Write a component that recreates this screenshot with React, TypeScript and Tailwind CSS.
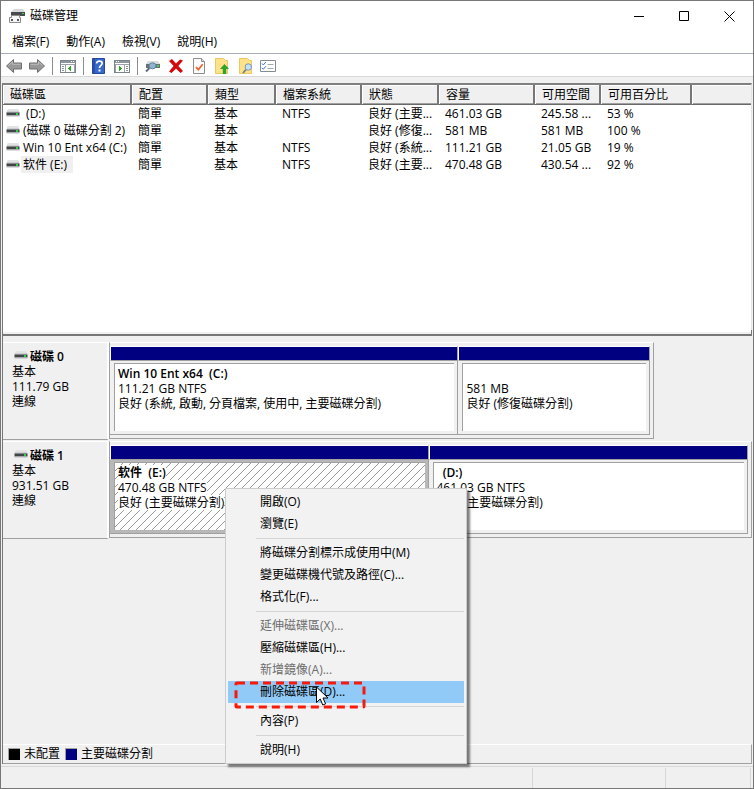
import type { ReactNode } from "react";
import clsx from "clsx";

type Volume = {
  name: string;
  layout: string;
  type: string;
  fs: string;
  status: string;
  capacity: string;
  free: string;
  percent: string;
  selected?: boolean;
};

type PartitionInfo = {
  title: string;
  size: string;
  status: string;
  grow: string;
  selected?: boolean;
};

const columns = [
  { label: "磁碟區", width: "w-[128px]" },
  { label: "配置", width: "w-[76px]" },
  { label: "類型", width: "w-[68px]" },
  { label: "檔案系統", width: "w-[86px]" },
  { label: "狀態", width: "w-[77px]" },
  { label: "容量", width: "w-[96px]" },
  { label: "可用空間", width: "w-[66px]" },
  { label: "可用百分比", width: "w-[91px]" },
  { label: "", width: "" },
];

const volumes: Volume[] = [
  { name: " (D:)", layout: "簡單", type: "基本", fs: "NTFS", status: "良好 (主要...", capacity: "461.03 GB", free: "245.58 ...", percent: "53 %" },
  { name: "(磁碟 0 磁碟分割 2)", layout: "簡單", type: "基本", fs: "", status: "良好 (修復...", capacity: "581 MB", free: "581 MB", percent: "100 %" },
  { name: "Win 10 Ent x64 (C:)", layout: "簡單", type: "基本", fs: "NTFS", status: "良好 (系統...", capacity: "111.21 GB", free: "21.05 GB", percent: "19 %" },
  { name: "软件 (E:)", layout: "簡單", type: "基本", fs: "NTFS", status: "良好 (主要...", capacity: "470.48 GB", free: "430.54 ...", percent: "92 %", selected: true },
];

const disks: { name: string; size: string; width: string; partitions: PartitionInfo[] }[] = [
  {
    name: "磁碟 0",
    size: "111.79 GB",
    width: "w-[84.7%]",
    partitions: [
      { title: "Win 10 Ent x64  (C:)", size: "111.21 GB NTFS", status: "良好 (系統, 啟動, 分頁檔案, 使用中, 主要磁碟分割)", grow: "grow-[349]" },
      { title: " ", size: "581 MB", status: "良好 (修復磁碟分割)", grow: "grow-[191]" },
    ],
  },
  {
    name: "磁碟 1",
    size: "931.51 GB",
    width: "w-full",
    partitions: [
      { title: "软件  (E:)", size: "470.48 GB NTFS", status: "良好 (主要磁碟分割)", grow: "grow-[319]", selected: true },
      { title: "  (D:)", size: "461.03 GB NTFS", status: "良好 (主要磁碟分割)", grow: "grow-[320]" },
    ],
  },
];

const contextMenu: { label: string; disabled?: boolean; active?: boolean }[][] = [
  [{ label: "開啟(O)" }, { label: "瀏覽(E)" }],
  [{ label: "將磁碟分割標示成使用中(M)" }, { label: "變更磁碟機代號及路徑(C)..." }, { label: "格式化(F)..." }],
  [
    { label: "延伸磁碟區(X)...", disabled: true },
    { label: "壓縮磁碟區(H)..." },
    { label: "新增鏡像(A)...", disabled: true },
    { label: "刪除磁碟區(D)...", active: true },
  ],
  [{ label: "內容(P)" }],
  [{ label: "說明(H)" }],
];

function DriveIcon() {
  return (
    <svg width="14" height="8" viewBox="0 0 14 8" className="shrink-0" aria-hidden="true">
      <path d="M2 0H12L13 1V4H1V1Z" fill="#e1e3e5" />
      <path d="M1 2H13L13.5 4H0.5Z" fill="#cdd0d2" />
      <rect x="0.5" y="3.5" width="13" height="3" fill="#414548" />
      <rect x="0.5" y="6.5" width="13" height="1" fill="#b4b7ba" />
      <rect x="10" y="4" width="2" height="2" fill="#2fd344" />
    </svg>
  );
}

function AppIcon() {
  return (
    <svg width="16" height="16" viewBox="0 0 16 16" aria-hidden="true">
      <path d="M5 1H14L16 4H2Z" fill="#d6d8da" />
      <path d="M2 4H16V8H2Z" fill="#474b4e" />
      <rect x="13" y="5" width="2" height="1" fill="#35d644" />
      <path d="M2.5 7.5H10.5V9.5H11.5V14.5H0.5V9.5H2.5Z" fill="#f6f6f6" stroke="#8b8b8b" />
      <rect x="2" y="11" width="2" height="2" fill="#5a5a5a" />
      <rect x="8" y="11" width="2" height="2" fill="#5a5a5a" />
    </svg>
  );
}

function ArrowIcon({ flip }: { flip?: boolean }) {
  return (
    <svg width="16" height="16" viewBox="0 0 16 16" className={clsx(flip && "-scale-x-100")} aria-hidden="true">
      <path d="M0.5 8L7.5 1.5V5H15.5V11H7.5V14.5Z" fill="#989898" stroke="#6f6f6f" />
      <path d="M2.5 7.5L6.5 3.8V6.3H14.5" fill="none" stroke="#bdbdbd" />
    </svg>
  );
}

function PanelIcon({ flip }: { flip?: boolean }) {
  return (
    <svg width="16" height="16" viewBox="0 0 16 16" className={clsx(flip && "-scale-x-100")} shapeRendering="crispEdges" aria-hidden="true">
      <path d="M0.5 2.5H15.5V14.5H0.5Z" fill="#fff" stroke="#7d858c" />
      <path d="M1 3H15V5H1Z" fill="#8f979e" />
      <path d="M11 3H12V4H11ZM13 3H14V4H13Z" fill="#fff" />
      <path d="M1 6.5H15M5.5 7V14M14.5 7V14" stroke="#9ba2a8" />
      <path d="M2 8.5H4M2 10.5H4M2 12.5H4" stroke="#8b939a" />
      <path d="M11 8V13L8 10.5Z" fill="#28a71e" />
    </svg>
  );
}

function HelpIcon() {
  return (
    <svg width="16" height="16" viewBox="0 0 16 16" aria-hidden="true">
      <path d="M1.5 0.5H13.5V15.5H1.5Z" fill="#3768cb" stroke="#234a9f" />
      <path d="M2 1H4V15H2Z" fill="#2a50ac" />
      <path d="M5.6 5.4C5.6 2.3 11.2 2.4 11.2 5.3C11.2 7.3 8.5 7.6 8.5 10" fill="none" stroke="#fff" strokeWidth="1.7" />
      <rect x="7.5" y="11.5" width="2" height="2" fill="#fff" />
    </svg>
  );
}

function DiskSearchIcon() {
  return (
    <svg width="16" height="16" viewBox="0 0 16 16" aria-hidden="true">
      <path d="M3 3H13L15 6H1Z" fill="#dadcde" />
      <rect x="1" y="6" width="14" height="4" fill="#6a6f73" />
      <rect x="12" y="7" width="2" height="2" fill="#3ad24a" />
      <path d="M4.5 10L1 13.5" stroke="#5f6e7c" strokeWidth="2" />
      <ellipse cx="7.5" cy="7.8" rx="3.5" ry="3" fill="#8fb4d2" stroke="#64829c" />
    </svg>
  );
}

function DeleteIcon() {
  return (
    <svg width="16" height="16" viewBox="0 0 16 16" aria-hidden="true">
      <path d="M1 3L4 1L8 5.5L12 1.5L15 2.5L10.3 8L15 13L12.5 15L8 10.6L3.6 15L1 13.4L5.6 8Z" fill="#d3080c" />
    </svg>
  );
}

function CheckDocIcon() {
  return (
    <svg width="16" height="16" viewBox="0 0 16 16" aria-hidden="true">
      <path d="M2.5 0.5H10.5L13.5 3.5V15.5H2.5Z" fill="#fbfbfb" stroke="#8d8d8d" />
      <path d="M10.5 0.5V3.5H13.5" fill="#ddd" stroke="#8d8d8d" />
      <path d="M5 9.2L7.3 11.7L11.7 6.2" fill="none" stroke="#ec6333" strokeWidth="1.8" />
    </svg>
  );
}

function FolderUpIcon() {
  return (
    <svg width="16" height="16" viewBox="0 0 16 16" aria-hidden="true">
      <path d="M1.5 0.5H9.5L11.5 2.5H13.5V15.5H1.5Z" fill="#ffe187" stroke="#e9c966" />
      <path d="M10.5 6L15 11H12.2V16H8.8V11H6Z" fill="#2aa52c" />
    </svg>
  );
}

function FolderSearchIcon() {
  return (
    <svg width="16" height="16" viewBox="0 0 16 16" aria-hidden="true">
      <path d="M2.5 0.5H10.5L12.5 2.5H14.5V15.5H2.5Z" fill="#ffe187" stroke="#e9c966" />
      <path d="M9 11.5L6 15" stroke="#6f7f8d" strokeWidth="1.8" />
      <circle cx="11.3" cy="9" r="3.2" fill="#c6e2f5" stroke="#7a97b0" />
    </svg>
  );
}

function ChecklistIcon() {
  return (
    <svg width="16" height="16" viewBox="0 0 16 16" aria-hidden="true">
      <path d="M0.5 2.5H15.5V13.5H0.5Z" fill="#fff" stroke="#858d94" />
      <path d="M2 5.5L3.3 7L5.8 4M2 9.8L3.3 11.3L5.8 8.3" fill="none" stroke="#3878c9" />
      <path d="M7.5 6.5H13.5M7.5 10.5H13.5" stroke="#a0a7ad" />
    </svg>
  );
}

function ToolButton({ label, children }: { label: string; children: ReactNode }) {
  return (
    <button type="button" aria-label={label} className="size-4 shrink-0">
      {children}
    </button>
  );
}

function Divider() {
  return <div className="h-[18px] w-px bg-[#8d8d8d]" />;
}

function TitleBar() {
  return (
    <header className="flex h-[30px] items-center pr-px pl-2">
      <AppIcon />
      <h1 className="ml-[5px] flex-1">磁碟管理</h1>
      <button type="button" aria-label="最小化" className="flex h-full w-[45px] items-center justify-center">
        <svg width="11" height="11" viewBox="0 0 11 11"><path d="M0 5.5H10" stroke="#000" /></svg>
      </button>
      <button type="button" aria-label="最大化" className="flex h-full w-[45px] items-center justify-center">
        <svg width="11" height="11" viewBox="0 0 11 11"><path d="M0.5 0.5H9.5V9.5H0.5Z" fill="none" stroke="#000" /></svg>
      </button>
      <button type="button" aria-label="關閉" className="flex h-full w-[45px] items-center justify-center">
        <svg width="11" height="11" viewBox="0 0 11 11"><path d="M0.5 0.5L10.5 10.5M10.5 0.5L0.5 10.5" stroke="#000" /></svg>
      </button>
    </header>
  );
}

function Toolbar() {
  return (
    <div className="flex h-[23px] items-center gap-[7px] border-b border-[#d9d9d9] pt-0.5 pl-[5px]">
      <ToolButton label="上一頁"><ArrowIcon /></ToolButton>
      <ToolButton label="下一頁"><ArrowIcon flip /></ToolButton>
      <Divider />
      <ToolButton label="顯示主控台樹狀目錄"><PanelIcon /></ToolButton>
      <Divider />
      <ToolButton label="說明"><HelpIcon /></ToolButton>
      <ToolButton label="顯示動作窗格"><PanelIcon flip /></ToolButton>
      <Divider />
      <ToolButton label="重新掃描"><DiskSearchIcon /></ToolButton>
      <ToolButton label="刪除"><DeleteIcon /></ToolButton>
      <ToolButton label="內容"><CheckDocIcon /></ToolButton>
      <ToolButton label="開啟"><FolderUpIcon /></ToolButton>
      <ToolButton label="瀏覽"><FolderSearchIcon /></ToolButton>
      <ToolButton label="設定"><ChecklistIcon /></ToolButton>
    </div>
  );
}

function VolumeTable() {
  return (
    <table className="w-full table-fixed border-collapse text-left whitespace-nowrap">
      <thead>
        <tr className="bg-[#f0f0f0]">
          {columns.map((col) => (
            <th
              key={col.label}
              className={clsx(
                "h-[19px] border-r-2 border-b border-r-[#777] border-b-[#696969] pt-px pb-0 pl-[7px] font-normal shadow-[inset_1px_1px_0_#fff,inset_0_-1px_0_#a0a0a0] last:border-r-0",
                col.width
              )}
            >
              {col.label}
            </th>
          ))}
        </tr>
      </thead>
      <tbody>
        {volumes.map((v) => (
          <tr key={v.name} className="h-[17px] leading-[17px]">
            <td className="p-0 pl-[3px]">
              <div className="flex h-[17px] items-center">
                <DriveIcon />
                <span className={clsx("ml-px h-[17px] pl-0.5 whitespace-pre", v.selected && "bg-[#f0f0f0] pr-1.5")}>
                  {v.name}
                </span>
              </div>
            </td>
            <td className="p-0 pl-[7px]">{v.layout}</td>
            <td className="p-0 pl-[7px]">{v.type}</td>
            <td className="p-0 pl-[7px]">{v.fs}</td>
            <td className="p-0 pl-[7px]">{v.status}</td>
            <td className="p-0 pl-[7px]">{v.capacity}</td>
            <td className="p-0 pl-[7px]">{v.free}</td>
            <td className="p-0 pl-[7px]">{v.percent}</td>
            <td className="p-0"></td>
          </tr>
        ))}
      </tbody>
    </table>
  );
}

function Hatch() {
  return (
    <svg className="absolute inset-0 size-full" shapeRendering="crispEdges" aria-hidden="true">
      <defs>
        <pattern id="hatch" width="8" height="8" patternUnits="userSpaceOnUse">
          <path d="M-1 9L9 -1" stroke="#9a9a9a" />
        </pattern>
      </defs>
      <rect width="100%" height="100%" fill="url(#hatch)" />
    </svg>
  );
}

function Partition({ partition }: { partition: PartitionInfo }) {
  const { title, size, status, grow, selected } = partition;
  const line = clsx("w-fit whitespace-pre", selected && "bg-white");
  return (
    <div className={clsx("min-w-0 basis-0 border-t border-r border-b border-t-white border-r-[#a0a0a0] border-b-[#a0a0a0]", grow)}>
      <div className="h-3.5 border-b border-l border-b-[#a0a0a0] border-l-white bg-[#000080] bg-clip-padding" />
      <div className={clsx("p-[3px] pt-0.5 pl-1", selected && "bg-[#b8b8b8]")}>
        <div className="relative h-[68px] overflow-hidden border-t border-l border-[#a0a0a0] bg-white pt-0.5 pl-[3px]">
          {selected && <Hatch />}
          <div className="relative leading-[15px]">
            <p className={clsx(line, "font-semibold")}>{title}</p>
            <p className={line}>{size}</p>
            <p className={line}>{status}</p>
          </div>
        </div>
      </div>
    </div>
  );
}

function DiskMap() {
  return (
    <section className="flex flex-1 flex-col gap-px pt-1.5">
      {disks.map((disk) => (
        <div key={disk.name} className="flex items-start">
          <div className="h-[98px] w-[106px] shrink-0 border-t border-r-2 border-b border-t-white border-r-white border-b-[#a0a0a0] pt-1.5 pl-[9px] leading-[15px]">
            <div className="flex items-start pl-0.5 font-semibold">
              <div className="pt-0.5">
                <DriveIcon />
              </div>
              <h2 className="ml-0.5">{disk.name}</h2>
            </div>
            <p>基本</p>
            <p>{disk.size}</p>
            <p>連線</p>
          </div>
          <div className="min-w-0 flex-1">
            <div className={clsx("flex border border-[#a0a0a0] border-t-white py-[3px] pr-[3px]", disk.width)}>
              {disk.partitions.map((p) => (
                <Partition key={p.title} partition={p} />
              ))}
            </div>
          </div>
        </div>
      ))}
    </section>
  );
}

function Cursor() {
  return (
    <svg width="13" height="20" viewBox="0 0 13 20" className="absolute top-[197px] left-[90px]" aria-hidden="true">
      <path d="M0.5 1V16.5L4.2 13L6.8 19L9.6 17.8L7 12H12Z" fill="#fff" stroke="#000" />
    </svg>
  );
}

function ContextMenu() {
  return (
    <div
      role="menu"
      className="absolute top-[487px] left-[224px] w-[242px] border border-[#ccc] bg-[#f2f2f2] p-0.5 shadow-[3px_3px_2px_rgba(0,0,0,0.5)]"
    >
      {contextMenu.map((group, i) => (
        <div key={group[0].label} className={clsx(i > 0 && "relative pt-[7px]")}>
          {i > 0 && <hr className="absolute top-[3px] right-0 left-7 border-[#d4d4d4]" />}
          {group.map((item) => (
            <button
              key={item.label}
              type="button"
              role="menuitem"
              disabled={item.disabled}
              className={clsx("block h-[22px] w-full pl-8 text-left", item.active && "bg-[#91c9f7]", item.disabled && "text-[#6d6d6d]")}
            >
              {item.label}
            </button>
          ))}
        </div>
      ))}
      <svg width="132" height="28" className="absolute top-[192px] left-2" aria-hidden="true">
        <rect x="2" y="2" width="128" height="24" rx="1" fill="none" stroke="#f8180c" strokeWidth="3" strokeDasharray="8 5" />
      </svg>
      <Cursor />
    </div>
  );
}

export default function App() {
  return (
    <div className="relative flex min-h-screen flex-col border border-[#777] bg-[#f0f0f0] font-['Open_Sans','Noto_Sans_CJK_TC',sans-serif] text-xs text-black">
      <div className="bg-white">
        <TitleBar />
        <nav className="flex h-[23px] items-center gap-[17px] border-b border-[#a9aeb8] pl-[11px]">
          <button type="button">檔案(F)</button>
          <button type="button">動作(A)</button>
          <button type="button">檢視(V)</button>
          <button type="button">說明(H)</button>
        </nav>
        <Toolbar />
      </div>

      <main className="mt-1.5 mr-px ml-px flex flex-1 flex-col border-l border-[#777]">
        <div className="min-h-[247px] border-t-2 border-r border-t-[#808080] border-r-[#e3e3e3] bg-white">
          <VolumeTable />
        </div>
        <div className="h-[6px] border-r border-b-2 border-[#777] bg-[#f0f0f0] shadow-[inset_0_2px_0_#fff]" />
        <DiskMap />
        <footer className="flex h-5 items-center border-t border-r border-b border-t-white border-r-[#a0a0a0] border-b-[#a0a0a0] pl-[5px]">
          <span className="size-3 border-t border-l border-[#a0a0a0] bg-black" />
          <span className="ml-1">未配置</span>
          <span className="ml-[5px] size-3 border-t border-l border-[#a0a0a0] bg-[#000080]" />
          <span className="ml-1">主要磁碟分割</span>
        </footer>
      </main>

      <div className="mt-0.5 flex h-[22px] border-t border-[#d7d7d7] pt-px">
        <div className="flex-1 border-r border-[#d7d7d7]" />
        <div className="w-[133px] border-r border-[#d7d7d7]" />
        <div className="mr-0.5 w-[85px] border-r border-[#d7d7d7]" />
      </div>

      <ContextMenu />
    </div>
  );
}
